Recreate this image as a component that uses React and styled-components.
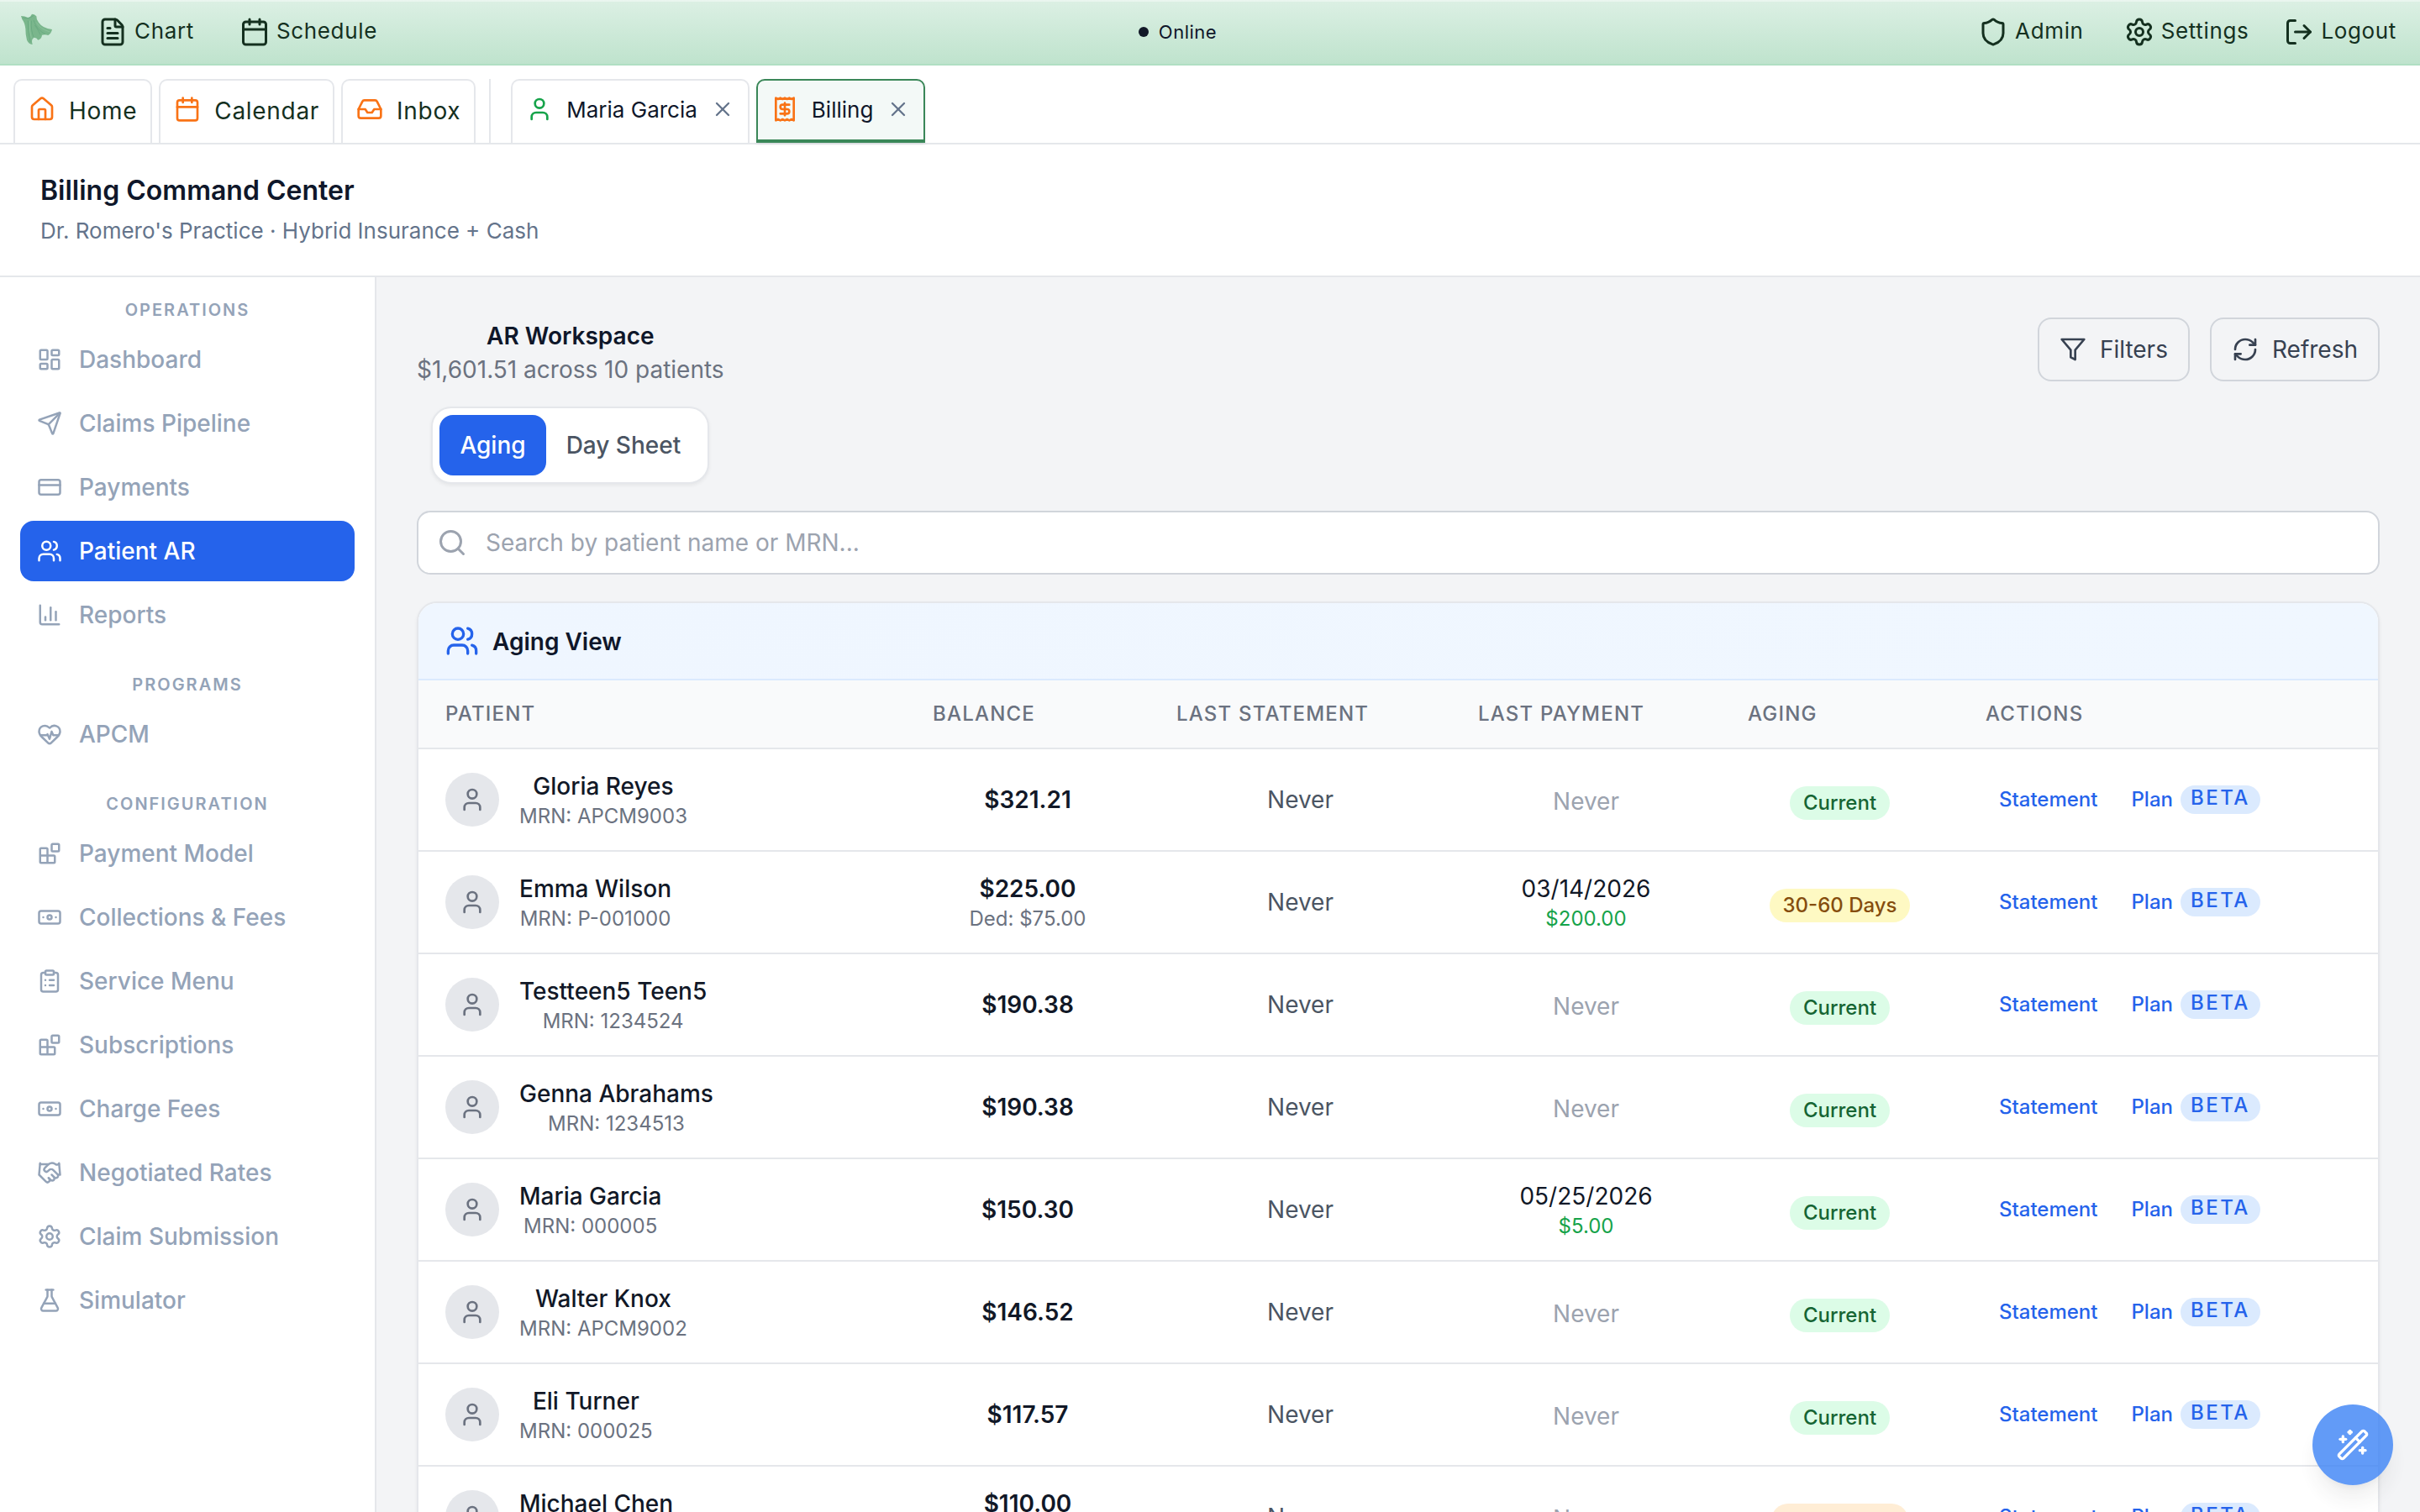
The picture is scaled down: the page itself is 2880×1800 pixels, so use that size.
import React from 'react';
import styled, { createGlobalStyle, css } from 'styled-components';
import {
    FileText, Calendar, Shield, Settings, LogOut, House, Inbox, User, X, Receipt,
    LayoutDashboard, Send, CreditCard, Users, ChartColumn, HeartPulse, Banknote,
    ClipboardList, Handshake, FlaskConical, RefreshCw, Search, WandSparkles
} from 'lucide-react';

const GlobalStyle = createGlobalStyle`
    *, *::before, *::after {
        box-sizing: border-box;
    }
    body {
        margin: 0;
        background: #fff;
        font-family: Inter, "Liberation Sans", sans-serif;
        font-size: 28px;
        line-height: 40px;
        color: #0f172a;
        -webkit-font-smoothing: antialiased;
    }
    svg {
        display: block;
        flex: none;
    }
`
const Page = styled.div`
    width: 2880px;
    height: 1800px;
    display: flex;
    flex-direction: column;
    overflow: hidden;
`

// top bar
const TopBar = styled.div`
    flex: none;
    height: 78px;
    padding: 0 28px 0 24px;
    display: flex;
    align-items: center;
    justify-content: space-between;
    background: linear-gradient(180deg, #dcf0e4 0%, #bfe3cd 100%);
    border-bottom: 2px solid #b0dfc3;
    box-shadow: inset 0 2px 0 rgba(255, 255, 255, 0.4);
    color: #14301f;
`
const TopGroup = styled.div`
    display: flex;
    align-items: center;
    gap: ${p => p.$gap}px;
`
const TopLink = styled.div`
    display: flex;
    align-items: center;
    gap: 8px;
    font-size: 26px;
    letter-spacing: 0.65px;
    ${p => p.$tight && css`
        margin-left: -6px;
    `}
`
const TopLabel = styled.span`
    padding-bottom: 3px;
`
const Logo = styled.div`
    width: 60px;
    margin-left: -8px;
    margin-right: -14px;
`
const Status = styled.div`
    display: flex;
    align-items: center;
    gap: 12px;
    font-size: 22px;
    letter-spacing: 0.5px;
    color: #0f172a;
`
const StatusDot = styled.div`
    width: 12px;
    height: 12px;
    border-radius: 50%;
    background: #111827;
`

// tabs
const TabBar = styled.div`
    flex: none;
    height: 94px;
    padding: 16px 16px 0;
    display: flex;
    align-items: stretch;
    gap: 8px;
    border-bottom: 2px solid #e5e7eb;
`
const Tab = styled.div`
    display: flex;
    align-items: center;
    gap: 16px;
    padding: 0 16px 6px;
    border: 2px solid #e5e7eb;
    border-bottom-width: 0;
    border-radius: 10px 10px 0 0;
    font-size: 26px;
    color: #0f172a;
    ${p => p.$active && css`
        padding-bottom: 2px;
        background: #f3f9f7;
        border-color: #3a8758;
        border-bottom-width: 4px;
        box-shadow: 0 2px 4px rgba(0, 0, 0, 0.06);
    `}
`
const TabLabel = styled.span`
    padding-top: 1px;
`
const PinnedLabel = styled.span`
    padding-top: 3px;
    font-size: 28px;
    letter-spacing: 0.7px;
    color: #14301f;
`
const TabSeparator = styled.div`
    width: 2px;
    margin: 0 16px 0 8px;
    background: #e5e7eb;
`

// page header
const Header = styled.div`
    flex: none;
    height: 158px;
    padding: 32px 48px 0;
    border-bottom: 2px solid #e5e7eb;
`
const HeaderTitle = styled.div`
    font-size: 32px;
    line-height: 46px;
    font-weight: 600;
`
const HeaderSub = styled.div`
    padding-top: 5px;
    font-size: 26px;
    line-height: 40px;
    color: #64748b;
`
const Body = styled.div`
    flex: 1;
    min-height: 0;
    display: flex;
`

// sidebar
const Sidebar = styled.div`
    width: 448px;
    flex: none;
    padding: 0 24px;
    border-right: 2px solid #e5e7eb;
    color: #94a3b8;
`
const SectionLabel = styled.div`
    padding: 24px 0 8px;
    font-size: 20px;
    line-height: 30px;
    font-weight: 600;
    letter-spacing: 2px;
    text-align: center;
    ${p => p.$gap && css`
        padding-top: 32px;
    `}
`
const NavList = styled.div`
    display: flex;
    flex-direction: column;
    gap: 4px;
`
const NavItem = styled.div`
    height: 72px;
    padding: 0 20px;
    display: flex;
    align-items: center;
    gap: 20px;
    border-radius: 16px;
    font-weight: 500;
    ${p => p.$active && css`
        background: #2563eb;
        color: #fff;
    `}
`

// workspace
const Main = styled.div`
    flex: 1;
    padding: 48px;
    background: #f3f4f6;
`
const WorkspaceTop = styled.div`
    display: flex;
    justify-content: space-between;
    align-items: flex-start;
`
const Heading = styled.div`
    padding-top: 2px;
    display: flex;
    flex-direction: column;
    align-items: center;
`
const HeadingTitle = styled.div`
    font-weight: 600;
`
const HeadingSub = styled.div`
    color: #6b7280;
`
const Switcher = styled.div`
    margin-top: 24px;
    padding: 8px;
    display: flex;
    background: #fff;
    border: 2px solid #e5e7eb;
    border-radius: 24px;
    box-shadow: 0 2px 4px rgba(0, 0, 0, 0.06);
`
const SwitchButton = styled.div`
    height: 72px;
    padding: 0 24px;
    display: flex;
    align-items: center;
    border-radius: 16px;
    font-weight: 500;
    color: ${p => (p.$active ? '#fff' : '#4b5563')};
    background: ${p => (p.$active ? '#2563eb' : 'transparent')};
`
const ButtonRow = styled.div`
    display: flex;
    gap: 24px;
`
const OutlineButton = styled.div`
    height: 76px;
    padding: 0 24px;
    display: flex;
    align-items: center;
    gap: 16px;
    border: 2px solid #d1d5db;
    border-radius: 16px;
    color: #374151;
`
const SearchBox = styled.div`
    height: 76px;
    margin-top: 32px;
    padding: 0 22px;
    display: flex;
    align-items: center;
    gap: 22px;
    background: #fff;
    border: 2px solid #d1d5db;
    border-radius: 16px;
    color: #9ca3af;
`

// aging table
const Card = styled.div`
    margin-top: 32px;
    overflow: hidden;
    background: #fff;
    border: 2px solid #e5e7eb;
    border-radius: 24px;
    box-shadow: 0 2px 4px rgba(0, 0, 0, 0.05);
`
const CardHeader = styled.div`
    height: 92px;
    padding: 0 32px;
    display: flex;
    align-items: center;
    gap: 16px;
    background: linear-gradient(90deg, #eff6ff, #f0f7ff);
    border-bottom: 2px solid #dbeafe;
    font-weight: 600;
`
const CardTitle = styled.div`
    padding-top: 2px;
`
const Table = styled.div`
    display: grid;
    grid-template-columns: 580px 290px 359px 321px 283px 1fr;
`
const HeadCell = styled.div`
    height: 82px;
    padding: 0 32px;
    display: flex;
    align-items: center;
    background: #f9fafb;
    border-bottom: 2px solid #e5e7eb;
    font-size: 24px;
    font-weight: 500;
    letter-spacing: 1.2px;
    color: #6b7280;
`
const Cell = styled.div`
    height: 122px;
    display: flex;
    flex-direction: column;
    align-items: center;
    justify-content: center;
    border-bottom: 2px solid #e5e7eb;
`
const PatientCell = styled(Cell)`
    padding: 0 32px;
    flex-direction: row;
    justify-content: flex-start;
    gap: 24px;
`
const ActionCell = styled(Cell)`
    padding: 0 32px;
    flex-direction: row;
    justify-content: flex-start;
    gap: 8px;
`
const Avatar = styled.div`
    width: 64px;
    height: 64px;
    display: flex;
    align-items: center;
    justify-content: center;
    border-radius: 50%;
    background: #e5e7eb;
    color: #6b7280;
`
const Stack = styled.div`
    display: flex;
    flex-direction: column;
    align-items: center;
`
const Name = styled.div`
    font-weight: 500;
    color: #111827;
`
const Small = styled.div`
    font-size: 24px;
    line-height: 32px;
    color: ${p => (p.$paid ? '#16a34a' : '#6b7280')};
`
const Amount = styled.div`
    font-weight: 600;
    color: #111827;
`
const DateText = styled.div`
    color: #111827;
`
const Never = styled.div`
    padding-top: ${p => (p.$muted ? 4 : 0)}px;
    color: ${p => (p.$muted ? '#9ca3af' : '#4b5563')};
`
const badgeColors = {
    green: css`
        background: #dcfce7;
        color: #166534;
    `,
    yellow: css`
        background: #fef9c3;
        color: #854d0e;
    `,
    orange: css`
        background: #ffedd5;
        color: #9a3412;
    `
}
const AgeBadge = styled.div`
    margin-top: 8px;
    padding: 4px 16px;
    border-radius: 20px;
    font-size: 24px;
    line-height: 32px;
    font-weight: 500;
    ${p => badgeColors[p.$color]}
`
const Action = styled.div`
    padding: 0 16px;
    display: flex;
    align-items: center;
    gap: 9px;
    font-size: 24px;
    font-weight: 500;
    color: #2563eb;
`
const Beta = styled.span`
    height: 34px;
    padding: 0 12px;
    border-radius: 17px;
    background: #dbeafe;
    line-height: 30px;
    letter-spacing: 2.5px;
`

// floating assistant button
const Fab = styled.div`
    position: fixed;
    right: 32px;
    bottom: 32px;
    width: 96px;
    height: 96px;
    display: flex;
    align-items: center;
    justify-content: center;
    border-radius: 50%;
    background: #3b82f6;
    color: #fff;
    opacity: 0.8;
    box-shadow: 0 20px 30px -6px rgba(0, 0, 0, 0.1), 0 8px 12px -8px rgba(0, 0, 0, 0.1);
`

function CapeLogo() {
    return (
        <svg width="60" height="56" viewBox="0 0 180 168">
            <path
                d="M27 27 Q40 27 52 33 Q62 30 66 20 Q76 20 82 28 Q81 38 90 50 Q104 71 138 75 Q135 90 124 96 Q113 92 102 95 Q101 108 88 113 Q83 104 74 104 Q62 109 68 129 Q54 127 48 113 Q43 95 43 72 Q40 50 31 39 Z"
                fill="#7ab68c"
            />
            <path
                d="M33 32 Q52 42 74 24 M52 44 Q50 78 60 120 M64 44 Q62 80 72 102 M72 42 Q82 76 114 92 M76 60 Q90 78 96 94"
                fill="none"
                stroke="#68a87f"
                strokeWidth="2.5"
            />
            <path
                d="M58 44 Q56 80 64 106 M82 50 Q96 74 130 84"
                fill="none"
                stroke="#8ec49e"
                strokeWidth="2.5"
            />
        </svg>
    )
}

function BlocksIcon({ size }) {
    return (
        <svg width={size} height={size} viewBox="0 0 24 24" fill="none" stroke="currentColor" strokeWidth="2" strokeLinecap="round" strokeLinejoin="round">
            <rect width="7" height="7" x="14" y="3" rx="1" />
            <path d="M10 21V8a1 1 0 0 0-1-1H4a1 1 0 0 0-1 1v12a1 1 0 0 0 1 1h12a1 1 0 0 0 1-1v-5a1 1 0 0 0-1-1H3" />
        </svg>
    )
}

function FilterIcon({ size }) {
    return (
        <svg width={size} height={size} viewBox="0 0 24 24" fill="none" stroke="currentColor" strokeWidth="2" strokeLinecap="round" strokeLinejoin="round">
            <polygon points="22 3 2 3 10 12.46 10 19 14 21 14 12.46 22 3" />
        </svg>
    )
}

const sections = [
    {
        title: 'OPERATIONS',
        items: [
            [LayoutDashboard, 'Dashboard'],
            [Send, 'Claims Pipeline'],
            [CreditCard, 'Payments'],
            [Users, 'Patient AR'],
            [ChartColumn, 'Reports']
        ]
    },
    { title: 'PROGRAMS', items: [[HeartPulse, 'APCM']] },
    {
        title: 'CONFIGURATION',
        items: [
            [BlocksIcon, 'Payment Model'],
            [Banknote, 'Collections & Fees'],
            [ClipboardList, 'Service Menu'],
            [BlocksIcon, 'Subscriptions'],
            [Banknote, 'Charge Fees'],
            [Handshake, 'Negotiated Rates'],
            [Settings, 'Claim Submission'],
            [FlaskConical, 'Simulator']
        ]
    }
]

const columns = ['PATIENT', 'BALANCE', 'LAST STATEMENT', 'LAST PAYMENT', 'AGING', 'ACTIONS']

const patients = [
    { name: 'Gloria Reyes', mrn: 'APCM9003', balance: '$321.21', age: 'Current', color: 'green' },
    { name: 'Emma Wilson', mrn: 'P-001000', balance: '$225.00', ded: '$75.00', paidOn: '03/14/2026', paid: '$200.00', age: '30-60 Days', color: 'yellow' },
    { name: 'Testteen5 Teen5', mrn: '1234524', balance: '$190.38', age: 'Current', color: 'green' },
    { name: 'Genna Abrahams', mrn: '1234513', balance: '$190.38', age: 'Current', color: 'green' },
    { name: 'Maria Garcia', mrn: '000005', balance: '$150.30', paidOn: '05/25/2026', paid: '$5.00', age: 'Current', color: 'green' },
    { name: 'Walter Knox', mrn: 'APCM9002', balance: '$146.52', age: 'Current', color: 'green' },
    { name: 'Eli Turner', mrn: '000025', balance: '$117.57', age: 'Current', color: 'green' },
    { name: 'Michael Chen', mrn: '000002', balance: '$110.00', ded: '$50.00', age: '61-90 Days', color: 'orange' }
]

function PatientRow({ patient }) {
    return (
        <>
            <PatientCell>
                <Avatar>
                    <User size={32} />
                </Avatar>
                <Stack>
                    <Name>{patient.name}</Name>
                    <Small>MRN: {patient.mrn}</Small>
                </Stack>
            </PatientCell>
            <Cell>
                <Amount>{patient.balance}</Amount>
                {patient.ded && <Small>Ded: {patient.ded}</Small>}
            </Cell>
            <Cell>
                <Never>Never</Never>
            </Cell>
            <Cell>
                {patient.paidOn ? (
                    <>
                        <DateText>{patient.paidOn}</DateText>
                        <Small $paid>{patient.paid}</Small>
                    </>
                ) : (
                    <Never $muted>Never</Never>
                )}
            </Cell>
            <Cell>
                <AgeBadge $color={patient.color}>{patient.age}</AgeBadge>
            </Cell>
            <ActionCell>
                <Action>Statement</Action>
                <Action>
                    Plan
                    <Beta>BETA</Beta>
                </Action>
            </ActionCell>
        </>
    )
}

export default function App() {
    return (
        <Page>
            <GlobalStyle />
            <TopBar>
                <TopGroup $gap={54}>
                    <Logo>
                        <CapeLogo />
                    </Logo>
                    <TopLink>
                        <FileText size={36} />
                        <TopLabel>Chart</TopLabel>
                    </TopLink>
                    <TopLink>
                        <Calendar size={36} />
                        <TopLabel>Schedule</TopLabel>
                    </TopLink>
                </TopGroup>
                <Status>
                    <StatusDot />
                    Online
                </Status>
                <TopGroup $gap={48}>
                    <TopLink>
                        <Shield size={36} />
                        <TopLabel>Admin</TopLabel>
                    </TopLink>
                    <TopLink>
                        <Settings size={36} />
                        <TopLabel>Settings</TopLabel>
                    </TopLink>
                    <TopLink $tight>
                        <LogOut size={36} />
                        <TopLabel>Logout</TopLabel>
                    </TopLink>
                </TopGroup>
            </TopBar>
            <TabBar>
                <Tab>
                    <House size={32} color="#f97316" />
                    <PinnedLabel>Home</PinnedLabel>
                </Tab>
                <Tab>
                    <Calendar size={32} color="#f97316" />
                    <PinnedLabel>Calendar</PinnedLabel>
                </Tab>
                <Tab>
                    <Inbox size={32} color="#f97316" />
                    <PinnedLabel>Inbox</PinnedLabel>
                </Tab>
                <TabSeparator />
                <Tab>
                    <User size={32} color="#16a34a" />
                    <TabLabel>Maria Garcia</TabLabel>
                    <X size={28} color="#64748b" />
                </Tab>
                <Tab $active>
                    <Receipt size={32} color="#f97316" />
                    <TabLabel>Billing</TabLabel>
                    <X size={28} color="#64748b" />
                </Tab>
            </TabBar>
            <Header>
                <HeaderTitle>Billing Command Center</HeaderTitle>
                <HeaderSub>Dr. Romero's Practice · Hybrid Insurance + Cash</HeaderSub>
            </Header>
            <Body>
                <Sidebar>
                    {sections.map((section, i) => (
                        <div key={section.title}>
                            <SectionLabel $gap={i > 0}>{section.title}</SectionLabel>
                            <NavList>
                                {section.items.map(([Icon, label]) => (
                                    <NavItem key={label} $active={label === 'Patient AR'}>
                                        <Icon size={30} />
                                        {label}
                                    </NavItem>
                                ))}
                            </NavList>
                        </div>
                    ))}
                </Sidebar>
                <Main>
                    <WorkspaceTop>
                        <Heading>
                            <HeadingTitle>AR Workspace</HeadingTitle>
                            <HeadingSub>$1,601.51 across 10 patients</HeadingSub>
                            <Switcher>
                                <SwitchButton $active>Aging</SwitchButton>
                                <SwitchButton>Day Sheet</SwitchButton>
                            </Switcher>
                        </Heading>
                        <ButtonRow>
                            <OutlineButton>
                                <FilterIcon size={32} />
                                Filters
                            </OutlineButton>
                            <OutlineButton>
                                <RefreshCw size={32} />
                                Refresh
                            </OutlineButton>
                        </ButtonRow>
                    </WorkspaceTop>
                    <SearchBox>
                        <Search size={36} />
                        Search by patient name or MRN...
                    </SearchBox>
                    <Card>
                        <CardHeader>
                            <Users size={40} color="#2563eb" />
                            <CardTitle>Aging View</CardTitle>
                        </CardHeader>
                        <Table>
                            {columns.map(column => (
                                <HeadCell key={column}>{column}</HeadCell>
                            ))}
                            {patients.map(patient => (
                                <PatientRow key={patient.name} patient={patient} />
                            ))}
                        </Table>
                    </Card>
                </Main>
            </Body>
            <Fab>
                <WandSparkles size={40} />
            </Fab>
        </Page>
    );
}
